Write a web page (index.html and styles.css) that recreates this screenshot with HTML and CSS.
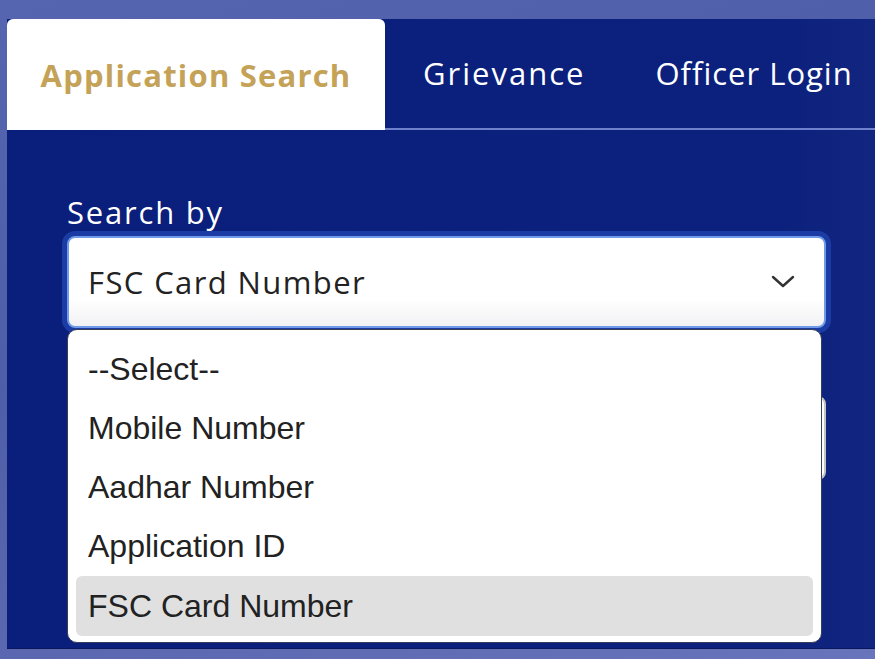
FILE: index.html
```html
<!DOCTYPE html>
<html lang="en">
<head>
<meta charset="utf-8">
<title>Application Search</title>
<link rel="stylesheet" href="styles.css">
</head>
<body>
<div class="page">
  <div class="panel">
    <nav class="tabs">
      <div class="tab active">Application Search</div>
      <div class="tab">Grievance</div>
      <div class="tab">Officer Login</div>
    </nav>
    <form class="form">
      <div class="field">
        <label class="label">Search by</label>
        <div class="select-wrap">
          <div class="select">
            <span class="select-value">FSC Card Number</span>
            <svg class="chevron" viewBox="0 0 24 14" width="24" height="14"><path d="M2 2 L12 11 L22 2" fill="none" stroke="#333" stroke-width="2.4" stroke-linecap="round" stroke-linejoin="round"/></svg>
          </div>
          <ul class="options">
            <li class="option">--Select--</li>
            <li class="option">Mobile Number</li>
            <li class="option">Aadhar Number</li>
            <li class="option">Application ID</li>
            <li class="option selected">FSC Card Number</li>
          </ul>
        </div>
      </div>
      <div class="field second">
        <label class="label">FSC Card Number</label>
        <div class="input"></div>
      </div>
    </form>
  </div>
</div>
</body>
</html>
```
FILE: styles.css
```css
* { box-sizing: border-box; }
html, body { margin: 0; padding: 0; }
body {
  width: 875px;
  height: 659px;
  overflow: hidden;
  background: linear-gradient(160deg, #5665b0 0%, #4f5ea8 40%, #6874bb 100%);
  font-family: "Open Sans", "Noto Sans", sans-serif;
}
.page {
  padding: 19px 0 0 7px;
}
.panel {
  background: linear-gradient(90deg, #0a1e7b 0%, #0c217d 90%, #122680 100%);
  height: 629px;
  box-shadow: 0 1px 0 #0a175a;
  overflow: hidden;
}
.tabs {
  display: flex;
  height: 111px;
  border-bottom: 2px solid #6f80cc;
}
.tab {
  display: flex;
  align-items: center;
  flex-shrink: 0;
  white-space: nowrap;
  padding: 0 34px 0 38px;
  color: #ffffff;
  font-size: 31px;
  font-weight: 500;
  height: 108px;
  letter-spacing: 2px;
}
.tab + .tab + .tab {
  padding-left: 36px;
  letter-spacing: 1px;
}
.tab.active {
  width: 378px;
  justify-content: center;
  padding: 0;
  background: #ffffff;
  color: #c4a257;
  font-weight: 700;
  letter-spacing: 1.2px;
  border-radius: 6px 6px 0 0;
  height: 111px;
}
.form {
  padding: 63px 0 0 60px;
}
.field {
  width: 759px;
}
.label {
  display: block;
  color: #ffffff;
  font-size: 31px;
  line-height: 38px;
  letter-spacing: 1.8px;
  margin-bottom: 5px;
}
.select-wrap {
  position: relative;
}
.select {
  height: 92px;
  border: 2px solid #6f9be8;
  border-radius: 8px;
  box-shadow: 0 0 0 5px #1b3ca4;
  background: linear-gradient(180deg, #ffffff 0%, #ffffff 70%, #f2f2f4 100%);
  display: flex;
  align-items: center;
  justify-content: space-between;
  padding: 0 29px 0 19px;
}
.select-value {
  color: #222222;
  font-size: 31px;
  letter-spacing: 1.4px;
}
.chevron { display: block; }
.options {
  position: absolute;
  top: 93px;
  left: 0;
  width: 755px;
  margin: 0;
  padding: 10px 8px 6px;
  list-style: none;
  background: #ffffff;
  border: 1px solid #3a3f58;
  border-radius: 10px;
  z-index: 5;
  font-family: "Liberation Sans", Arial, sans-serif;
}
.option {
  height: 59px;
  display: flex;
  align-items: center;
  padding: 0 12px;
  font-size: 32px;
  color: #222222;
  border-radius: 6px;
}
.option.selected {
  background: #e0e0e0;
  height: 60px;
}
.second {
  margin-top: 41px;
}
.second .label { visibility: hidden; height: 22px; }
.input {
  height: 84px;
  border: 2px solid #c4c4c4;
  border-radius: 8px;
  background: #ffffff;
}
```
